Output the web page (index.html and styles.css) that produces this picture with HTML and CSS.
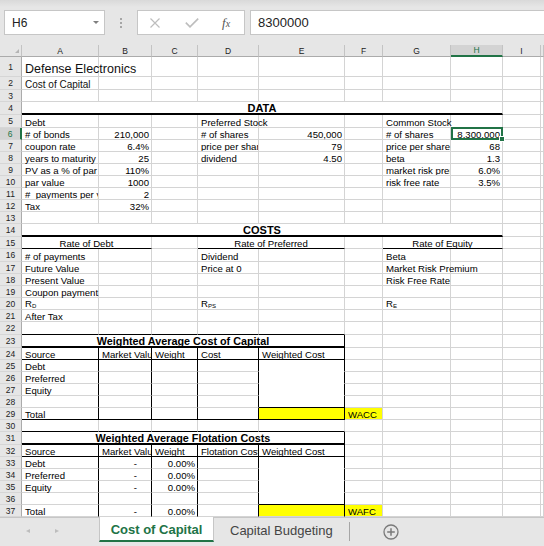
FILE: index.html
```html
<!DOCTYPE html>
<html>
<head>
<meta charset="utf-8">
<title>Cost of Capital</title>
<link rel="stylesheet" href="styles.css">
</head>
<body>
<div class="app">
  <div class="fbar">
    <div class="namebox"><span>H6</span><span class="dd"></span></div>
    <div class="grip"><i></i><i></i><i></i></div>
    <div class="fxbox">
      <svg class="ic-x" width="10" height="10" viewBox="0 0 10 10"><path d="M0.5 0.5 L9.5 9.5 M9.5 0.5 L0.5 9.5" stroke="#bdbdbd" stroke-width="1.2" fill="none"/></svg>
      <svg class="ic-ok" width="14" height="10" viewBox="0 0 14 10"><path d="M0.8 4.6 L5 8.8 L13.2 0.6" stroke="#bdbdbd" stroke-width="1.6" fill="none"/></svg>
      <span class="fx"><i>f</i><i class="fxx">x</i></span>
    </div>
    <div class="finput">8300000</div>
  </div>

  <div class="sheet">
    <table class="grid">
      <colgroup>
        <col class="c0"><col class="ca"><col class="cb"><col class="cc"><col class="cd"><col class="ce"><col class="cf"><col class="cg"><col class="ch"><col class="ci"><col class="cj">
      </colgroup>
      <tr class="hdr"><th class="corner"><svg width="21" height="11" viewBox="0 0 21 11"><polygon points="19,4 19,8 15,8" fill="#b4b4b4"/></svg></th><th>A</th><th>B</th><th>C</th><th>D</th><th>E</th><th>F</th><th>G</th><th class="selc">H</th><th>I</th><th></th></tr>
      <tr class="h20"><th class="rh">1</th><td class="t1">Defense Electronics</td><td></td><td></td><td></td><td></td><td></td><td></td><td></td><td></td><td></td></tr>
      <tr class="h13"><th class="rh">2</th><td class="t2">Cost of Capital</td><td></td><td></td><td></td><td></td><td></td><td></td><td></td><td></td><td></td></tr>
      <tr><th class="rh">3</th><td></td><td></td><td></td><td></td><td></td><td></td><td></td><td></td><td></td><td></td></tr>
      <tr class="h13"><th class="rh">4</th><td colspan="8" class="bt c hd">DATA</td><td></td><td></td></tr>
      <tr class="h13"><th class="rh">5</th><td>Debt</td><td></td><td></td><td>Preferred Stock</td><td></td><td></td><td>Common Stock</td><td></td><td></td><td></td></tr>
      <tr><th class="rh selr">6</th><td># of bonds</td><td class="n">210,000</td><td></td><td># of shares</td><td class="n">450,000</td><td></td><td># of shares</td><td class="n cur">8,300,000<span class="selbox"><span class="handle"></span></span></td><td></td><td></td></tr>
      <tr><th class="rh">7</th><td>coupon rate</td><td class="n">6.4%</td><td></td><td class="clip">price per share</td><td class="n">79</td><td></td><td>price per share</td><td class="n">68</td><td></td><td></td></tr>
      <tr><th class="rh">8</th><td>years to maturity</td><td class="n">25</td><td></td><td>dividend</td><td class="n">4.50</td><td></td><td>beta</td><td class="n">1.3</td><td></td><td></td></tr>
      <tr><th class="rh">9</th><td>PV as a % of par</td><td class="n">110%</td><td></td><td></td><td></td><td></td><td class="clip">market risk premium</td><td class="n">6.0%</td><td></td><td></td></tr>
      <tr><th class="rh">10</th><td>par value</td><td class="n">1000</td><td></td><td></td><td></td><td></td><td>risk free rate</td><td class="n">3.5%</td><td></td><td></td></tr>
      <tr><th class="rh">11</th><td class="clip">#&nbsp; payments per year</td><td class="n">2</td><td></td><td></td><td></td><td></td><td></td><td></td><td></td><td></td></tr>
      <tr><th class="rh">12</th><td>Tax</td><td class="n">32%</td><td></td><td></td><td></td><td></td><td></td><td></td><td></td><td></td></tr>
      <tr><th class="rh">13</th><td></td><td></td><td></td><td></td><td></td><td></td><td></td><td></td><td></td><td></td></tr>
      <tr class="h13"><th class="rh">14</th><td colspan="8" class="bt c hd">COSTS</td><td></td><td></td></tr>
      <tr><th class="rh">15</th><td colspan="2" class="bb c">Rate of Debt</td><td></td><td colspan="2" class="bb c">Rate of Preferred</td><td></td><td colspan="2" class="bb c">Rate of Equity</td><td></td><td></td></tr>
      <tr class="h13"><th class="rh">16</th><td># of payments</td><td></td><td></td><td>Dividend</td><td></td><td></td><td>Beta</td><td></td><td></td><td></td></tr>
      <tr><th class="rh">17</th><td>Future Value</td><td></td><td></td><td>Price at 0</td><td></td><td></td><td>Market Risk Premium</td><td></td><td></td><td></td></tr>
      <tr><th class="rh">18</th><td>Present Value</td><td></td><td></td><td></td><td></td><td></td><td>Risk Free Rate</td><td></td><td></td><td></td></tr>
      <tr><th class="rh">19</th><td>Coupon payment</td><td></td><td></td><td></td><td></td><td></td><td></td><td></td><td></td><td></td></tr>
      <tr><th class="rh">20</th><td>R<span class="sub">D</span></td><td></td><td></td><td>R<span class="sub">PS</span></td><td></td><td></td><td>R<span class="sub">E</span></td><td></td><td></td><td></td></tr>
      <tr><th class="rh">21</th><td>After Tax</td><td></td><td></td><td></td><td></td><td></td><td></td><td></td><td></td><td></td></tr>
      <tr class="h13"><th class="rh">22</th><td class="bb"></td><td class="bb"></td><td class="bb"></td><td class="bb"></td><td class="bb"></td><td></td><td></td><td></td><td></td><td></td></tr>
      <tr class="h13"><th class="rh">23</th><td colspan="5" class="bt br c hd2">Weighted Average Cost of Capital</td><td></td><td></td><td></td><td></td><td></td></tr>
      <tr><th class="rh">24</th><td class="bb br">Source</td><td class="bb br clip">Market Value</td><td class="bb br">Weight</td><td class="bb br">Cost</td><td class="bb br">Weighted Cost</td><td></td><td></td><td></td><td></td><td></td></tr>
      <tr><th class="rh">25</th><td class="br">Debt</td><td class="br"></td><td class="br"></td><td class="br"></td><td class="br nb"></td><td></td><td></td><td></td><td></td><td></td></tr>
      <tr><th class="rh">26</th><td class="br">Preferred</td><td class="br"></td><td class="br"></td><td class="br"></td><td class="br nb"></td><td></td><td></td><td></td><td></td><td></td></tr>
      <tr><th class="rh">27</th><td class="br">Equity</td><td class="br"></td><td class="br"></td><td class="br"></td><td class="br nb"></td><td></td><td></td><td></td><td></td><td></td></tr>
      <tr><th class="rh">28</th><td class="br"></td><td class="br"></td><td class="br"></td><td class="br"></td><td class="br bb"></td><td></td><td></td><td></td><td></td><td></td></tr>
      <tr><th class="rh">29</th><td class="br bb">Total</td><td class="br bb"></td><td class="br bb"></td><td class="br bb"></td><td class="br bb y"></td><td class="y">WACC</td><td></td><td></td><td></td><td></td></tr>
      <tr><th class="rh">30</th><td class="bb"></td><td class="bb"></td><td class="bb"></td><td class="bb"></td><td class="bb"></td><td></td><td></td><td></td><td></td><td></td></tr>
      <tr class="h13"><th class="rh">31</th><td colspan="5" class="bt br c hd2">Weighted Average Flotation Costs</td><td></td><td></td><td></td><td></td><td></td></tr>
      <tr><th class="rh">32</th><td class="bb br">Source</td><td class="bb br clip">Market Value</td><td class="bb br">Weight</td><td class="bb br clip">Flotation Cost</td><td class="bb br">Weighted Cost</td><td></td><td></td><td></td><td></td><td></td></tr>
      <tr><th class="rh">33</th><td class="br">Debt</td><td class="br dash">-</td><td class="br n">0.00%</td><td class="br"></td><td class="br nb"></td><td></td><td></td><td></td><td></td><td></td></tr>
      <tr><th class="rh">34</th><td class="br">Preferred</td><td class="br dash">-</td><td class="br n">0.00%</td><td class="br"></td><td class="br nb"></td><td></td><td></td><td></td><td></td><td></td></tr>
      <tr><th class="rh">35</th><td class="br">Equity</td><td class="br dash">-</td><td class="br n">0.00%</td><td class="br"></td><td class="br nb"></td><td></td><td></td><td></td><td></td><td></td></tr>
      <tr><th class="rh">36</th><td class="br"></td><td class="br"></td><td class="br"></td><td class="br"></td><td class="br bb"></td><td></td><td></td><td></td><td></td><td></td></tr>
      <tr><th class="rh">37</th><td class="br">Total</td><td class="br dash">-</td><td class="br n">0.00%</td><td class="br"></td><td class="br y"></td><td class="y">WAFC</td><td></td><td></td><td></td><td></td></tr>
    </table>
  </div>

  <div class="tabs">
    <div class="nav"><span class="arr-l"></span><span class="arr-r"></span></div>
    <div class="tab active">Cost of Capital</div>
    <div class="tab">Capital Budgeting</div>
    <div class="sep"></div>
    <svg class="plus" width="16" height="16" viewBox="0 0 16 16"><circle cx="8" cy="8" r="7" stroke="#7a7a7a" stroke-width="1.3" fill="none"/><path d="M8 4.2 V11.8 M4.2 8 H11.8" stroke="#7a7a7a" stroke-width="1.5"/></svg>
  </div>
</div>
</body>
</html>
```

FILE: styles.css
```css
* { box-sizing: border-box; }
html, body { margin: 0; padding: 0; }
body {
  width: 544px;
  height: 546px;
  overflow: hidden;
  background: #fff;
  font-family: "Liberation Sans", Arial, sans-serif;
}
.app {
  display: flex;
  flex-direction: column;
  width: 544px;
  height: 546px;
}

/* formula bar */
.fbar {
  flex: none;
  height: 45px;
  background: linear-gradient(#d9d9d9, #e6e6e6 7px, #e6e6e6);
  display: flex;
  align-items: flex-start;
  padding-top: 10px;
}
.namebox {
  margin-left: 4px;
  width: 101px;
  height: 25px;
  background: #fff;
  border: 1px solid #c6c6c6;
  display: flex;
  align-items: center;
  justify-content: space-between;
  padding: 0 5px 0 7px;
  font-size: 12px;
  color: #222;
}
.dd {
  width: 0;
  height: 0;
  border-left: 3.5px solid transparent;
  border-right: 3.5px solid transparent;
  border-top: 3.5px solid #7f7f7f;
}
.grip {
  width: 32px;
  height: 25px;
  display: flex;
  flex-direction: column;
  align-items: center;
  justify-content: center;
  gap: 2px;
}
.grip i {
  display: block;
  width: 2px;
  height: 2px;
  background: #a6a6a6;
}
.fxbox {
  width: 108px;
  height: 25px;
  background: #fff;
  border: 1px solid #c6c6c6;
  display: flex;
  align-items: center;
  padding-left: 12px;
}
.ic-x { display: block; }
.ic-ok { display: block; margin-left: 25px; }
.fx {
  margin-left: 23px;
  font-family: "Liberation Serif", "Times New Roman", serif;
  font-size: 13px;
  color: #555;
  line-height: 13px;
}
.fxx { font-size: 10px; }
.finput {
  flex: 1;
  margin-left: 5px;
  height: 25px;
  background: #fff;
  border: 1px solid #c6c6c6;
  border-right: none;
  padding-left: 7px;
  font-size: 13px;
  line-height: 23px;
  color: #222;
}

/* sheet */
.sheet {
  flex: none;
  height: 472px;
  overflow: hidden;
  background: #fff;
}
.grid {
  border-collapse: separate;
  border-spacing: 0;
  table-layout: fixed;
  width: 544px;
}
.c0 { width: 22px; }
.ca { width: 77px; }
.cb { width: 53px; }
.cc { width: 46px; }
.cd { width: 61px; }
.ce { width: 86px; }
.cf { width: 38px; }
.cg { width: 68px; }
.ch { width: 52px; }
.ci { width: 38px; }
.cj { width: 3px; }

tr { height: 12px; }
tr.h13 { height: 13px; }
tr.h20 { height: 20px; }

th {
  background: #e6e6e6;
  font-weight: normal;
  font-size: 8.5px;
  color: #222;
  padding: 0;
  text-align: center;
}
tr.hdr th {
  border-right: 1px solid #c3c3c3;
  border-bottom: 1px solid #ababab;
  vertical-align: middle;
  line-height: 10px;
}
tr.hdr th.corner { padding: 0; vertical-align: top; }
.corner svg { display: block; }
tr.hdr th.selc {
  background: #d3d3d3;
  color: #217346;
  border-bottom: 2px solid #217346;
}
th.rh {
  border-right: 1px solid #ababab;
  border-bottom: 1px solid #d6d6d6;
  vertical-align: middle;
  line-height: 10px;
}
th.rh.selr {
  background: #d3d3d3;
  color: #217346;
  border-right: 2px solid #217346;
}

td {
  padding: 0 2px 0 3px;
  border-right: 1px solid #d4d4d4;
  border-bottom: 1px solid #d4d4d4;
  white-space: nowrap;
  overflow: visible;
  font-size: 9.6px;
  line-height: 9px;
  vertical-align: bottom;
  color: #000;
}
td.n { text-align: right; padding-right: 2px; }
td.dash { text-align: right; padding-right: 14px; }
td.c { text-align: center; padding-left: 0; padding-right: 0; }
td.clip { overflow: hidden; }
td.bb { border-bottom-color: #000; }
td.br { border-right-color: #000; }
td.bt { border-bottom: 2px solid #000; }
td.nb { border-bottom-color: #fff; }
td.y { background: #ffff00; }
td.hd { font-size: 11px; font-weight: bold; }
td.hd2 { font-size: 10.8px; font-weight: bold; }
td.t1 { font-size: 12.5px; line-height: 12px; padding-bottom: 1px; color: #111; }
td.t2 { font-size: 10px; color: #111; }
.sub { font-size: 6px; vertical-align: -1px; line-height: 6px; }

td.cur { position: relative; }
.selbox {
  position: absolute;
  left: 0;
  top: -1px;
  right: -1px;
  bottom: -1px;
  border: 2px solid #217346;
}
.handle {
  position: absolute;
  right: -4px;
  bottom: -4px;
  width: 6px;
  height: 6px;
  background: #217346;
  border: 1px solid #fff;
}

/* sheet tabs */
.tabs {
  flex: none;
  height: 29px;
  background: #e6e6e6;
  border-top: 1px solid #c6c6c6;
  display: flex;
  align-items: flex-start;
}
.nav {
  width: 99px;
  height: 26px;
  display: flex;
  align-items: center;
  padding-left: 26px;
  gap: 25px;
}
.arr-l {
  width: 0;
  height: 0;
  border-top: 2.5px solid transparent;
  border-bottom: 2.5px solid transparent;
  border-right: 4px solid #bdbdbd;
}
.arr-r {
  width: 0;
  height: 0;
  border-top: 2.5px solid transparent;
  border-bottom: 2.5px solid transparent;
  border-left: 4px solid #bdbdbd;
}
.tab {
  height: 25px;
  padding: 0 16px;
  display: flex;
  align-items: center;
  font-size: 13px;
  color: #444;
}
.tab.active {
  margin-top: -1px;
  width: 115px;
  padding: 2px 0 0 0;
  justify-content: center;
  background: #fff;
  border-left: 1px solid #c6c6c6;
  border-right: 1px solid #c6c6c6;
  border-bottom: 2px solid #217346;
  color: #217346;
  font-weight: bold;
}
.sep {
  width: 1px;
  height: 19px;
  margin-top: 4px;
  background: #a6a6a6;
}
.plus {
  display: block;
  margin-left: 33px;
  margin-top: 6px;
}
```
